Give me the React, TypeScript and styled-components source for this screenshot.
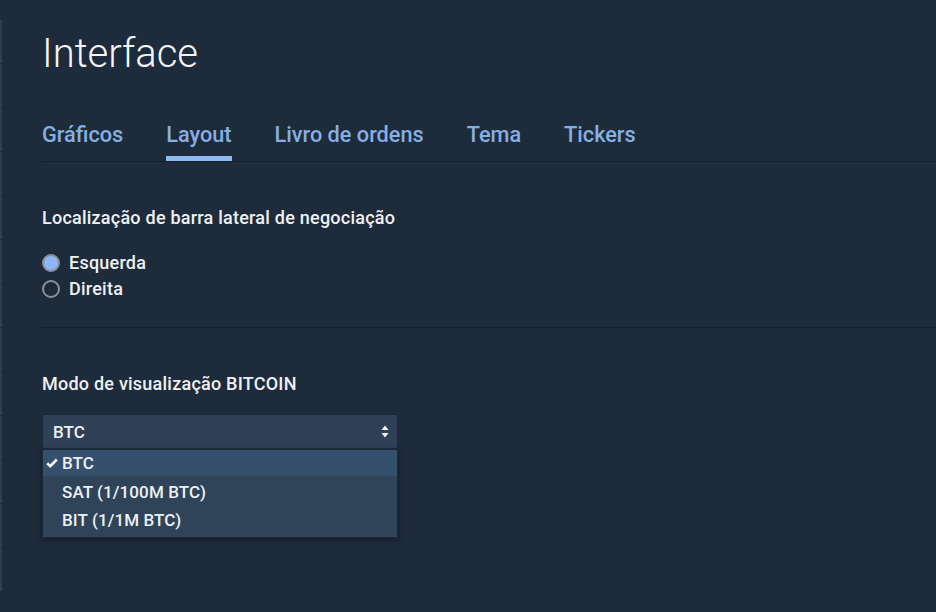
import React from "react";
import styled, { createGlobalStyle } from "styled-components";

const GlobalStyle = createGlobalStyle`
    html, body {
        margin: 0;
        padding: 0;
        background: #1e2b3b;
        font-family: Roboto, "Liberation Sans", sans-serif;
        -webkit-font-smoothing: antialiased;
    }
`;

const Page = styled.div`
    display: flex;
    width: 936px;
    height: 612px;
    background: #1e2b3b;
    overflow: hidden;
`;

const SideStrip = styled.div`
    display: flex;
    flex-direction: column;
    gap: 1px;
    width: 2px;
    padding-top: 20px;
`;

const SideItem = styled.div`
    height: 43px;
    background: #2c3f55;
`;

const Main = styled.div`
    flex: 1;
    padding: 30px 0 0 40px;
    display: flex;
    flex-direction: column;
`;

const Title = styled.h1`
    margin: 0;
    font-size: 40px;
    line-height: 48px;
    font-weight: 300;
    color: #f3f5f7;
`;

const Tabs = styled.div`
    display: flex;
    gap: 43px;
    margin-top: 45px;
    border-bottom: 1px solid #15202d;
`;

const Tab = styled.div<{ $active?: boolean }>`
    font-size: 21.7px;
    line-height: 24px;
    font-weight: 500;
    color: #86b0e4;
    padding-bottom: ${(p) => (p.$active ? "9px" : "14px")};
    border-bottom: ${(p) => (p.$active ? "5px solid #8fb9ef" : "none")};
`;

const Section = styled.div<{ $divider?: boolean }>`
    padding: ${(p) => (p.$divider ? "46px 0 28px" : "46px 0 0")};
    border-bottom: ${(p) => (p.$divider ? "1px solid #15202d" : "none")};
`;

const Label = styled.div`
    font-size: 18px;
    line-height: 20px;
    font-weight: 500;
    color: #eef1f4;
    letter-spacing: 0.23px;
`;

const RadioList = styled.div`
    display: flex;
    flex-direction: column;
    gap: 6px;
    margin-top: 25px;
`;

const RadioRow = styled.label`
    display: flex;
    align-items: center;
    gap: 9px;
    font-size: 18px;
    line-height: 20px;
    font-weight: 500;
    color: #eef1f4;
    letter-spacing: 0.23px;
`;

const RadioDot = styled.span<{ $checked?: boolean }>`
    box-sizing: border-box;
    width: 18px;
    height: 18px;
    border-radius: 50%;
    border: 2px solid #8b9096;
    background: ${(p) => (p.$checked ? "#8cb6f6" : "transparent")};
`;

const SelectWrap = styled.div`
    position: relative;
    width: 356px;
    margin-top: 20px;
`;

const SelectBox = styled.div`
    display: flex;
    align-items: center;
    justify-content: space-between;
    box-sizing: border-box;
    height: 34px;
    padding: 0 8px 0 10px;
    background: #2e4156;
    border: 1px solid #1a2838;
    border-bottom: none;
    font-size: 17px;
    font-weight: 500;
    color: #eef1f4;
    letter-spacing: 0.1px;
`;

const Menu = styled.div`
    position: absolute;
    top: 34px;
    left: 0;
    right: 0;
    box-sizing: border-box;
    padding: 0 0 3px;
    background: #2f4459;
    border: 1px solid #1a2838;
    border-top: 2px solid #1a2838;
    box-shadow: 0 2px 6px rgba(0, 0, 0, 0.35);
`;

const MenuItem = styled.div<{ $selected?: boolean }>`
    display: flex;
    align-items: center;
    height: ${(p) => (p.$selected ? "26px" : "28px")};
    margin-bottom: ${(p) => (p.$selected ? "2px" : "0")};
    padding-left: 19px;
    position: relative;
    background: ${(p) => (p.$selected ? "#35506c" : "transparent")};
    font-size: 17px;
    font-weight: 500;
    color: #eef1f4;
    letter-spacing: 0.1px;
`;

const Check = styled.svg`
    position: absolute;
    left: 3px;
    top: 8px;
`;

const sideItems = Array.from({ length: 13 });

const App = () => {
    return (<Page>
        <GlobalStyle />
        <SideStrip>
            {sideItems.map((_, i) => <SideItem key={i} />)}
        </SideStrip>
        <Main>
            <Title>Interface</Title>
            <Tabs>
                <Tab>Gráficos</Tab>
                <Tab $active>Layout</Tab>
                <Tab>Livro de ordens</Tab>
                <Tab>Tema</Tab>
                <Tab>Tickers</Tab>
            </Tabs>
            <Section $divider>
                <Label>Localização de barra lateral de negociação</Label>
                <RadioList>
                    <RadioRow><RadioDot $checked />Esquerda</RadioRow>
                    <RadioRow><RadioDot />Direita</RadioRow>
                </RadioList>
            </Section>
            <Section>
                <Label>Modo de visualização BITCOIN</Label>
                <SelectWrap>
                    <SelectBox>
                        BTC
                        <svg width="8" height="13" viewBox="0 0 8 13">
                            <path d="M4 0.5 L7.5 5 H0.5 Z" fill="#f2f4f6" />
                            <path d="M4 12.5 L7.5 8 H0.5 Z" fill="#f2f4f6" />
                        </svg>
                    </SelectBox>
                    <Menu>
                        <MenuItem $selected>
                            <Check width="12" height="10" viewBox="0 0 12 10">
                                <path d="M1.2 5.2 L4.3 8.2 L10.8 1.5" stroke="#f2f4f6" strokeWidth="2.6" fill="none" />
                            </Check>
                            BTC
                        </MenuItem>
                        <MenuItem>SAT (1/100M BTC)</MenuItem>
                        <MenuItem>BIT (1/1M BTC)</MenuItem>
                    </Menu>
                </SelectWrap>
            </Section>
        </Main>
    </Page>);
};

export default App;
